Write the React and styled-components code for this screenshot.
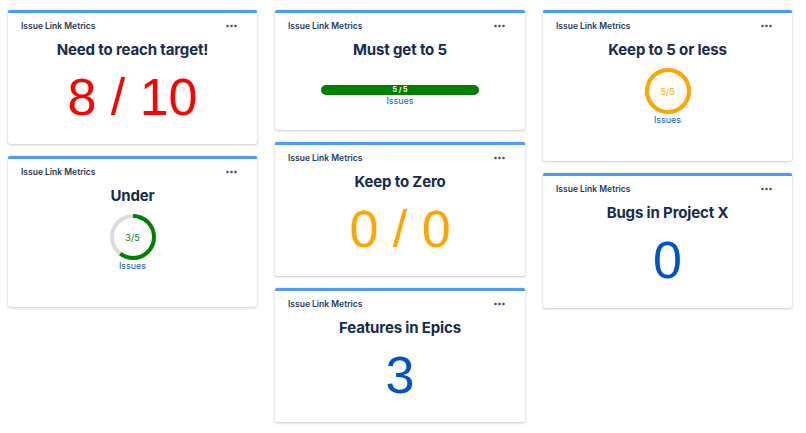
import React from "react";
import styled, { createGlobalStyle } from "styled-components";

const GlobalStyle = createGlobalStyle`
  body {
    margin: 0;
    background: #ffffff;
    font-family: "Inter", "Liberation Sans", Arial, sans-serif;
  }
`;

const Board = styled.div`
  display: grid;
  grid-template-columns: 249px 250px 249px;
  column-gap: 18px;
  align-items: start;
  padding: 10px 8px;
`;

const Column = styled.div`
  display: flex;
  flex-direction: column;
  gap: 12px;
`;

const Card = styled.div`
  box-sizing: border-box;
  height: ${(p) => p.$height}px;
  background: #fff;
  border-top: 3px solid #4c9aff;
  border-radius: 2px;
  box-shadow: 0 1px 3px rgba(9, 30, 66, 0.22), 0 0 1px rgba(9, 30, 66, 0.2);
  display: flex;
  flex-direction: column;
  align-items: center;
`;

const Header = styled.div`
  align-self: stretch;
  display: flex;
  justify-content: space-between;
  align-items: center;
  padding: 8px 20px 0 13px;
  height: 10px;
`;

const Label = styled.span`
  font-size: 8.5px;
  font-weight: 600;
  color: #253858;
  line-height: 10px;
`;

const Dots = styled.svg`
  display: block;
`;

const Title = styled.h2`
  margin: 10px 0 0;
  font-size: 15px;
  line-height: 18px;
  font-weight: 700;
  color: #172b4d;
  letter-spacing: -0.15px;
`;

const BigNumber = styled.div`
  margin-top: 12px;
  font-family: "Liberation Sans", Arial, sans-serif;
  font-size: 52px;
  line-height: 52px;
  color: ${(p) => p.$color};
`;

const BarTrack = styled.div`
  margin-top: 26px;
  width: 158px;
  height: 10px;
  border-radius: 5px;
  background: #008000;
  color: #fff;
  font-size: 7px;
  font-weight: 700;
  line-height: 10px;
  text-align: center;
`;

const IssuesLink = styled.a`
  font-size: 9px;
  line-height: 11px;
  color: #0c5fd8;
  text-decoration: none;
`;

const GaugeWrap = styled.div`
  margin-top: 9px;
  width: 46px;
  height: 46px;
  display: grid;
  place-items: center;
  & > * {
    grid-area: 1 / 1;
  }
`;

const GaugeText = styled.span`
  font-size: 9px;
  color: ${(p) => p.$color};
`;

function MoreIcon() {
  return (
    <Dots width="11" height="4" viewBox="0 0 11 4">
      <circle cx="1.5" cy="2" r="1.3" fill="#42526e" />
      <circle cx="5.5" cy="2" r="1.3" fill="#42526e" />
      <circle cx="9.5" cy="2" r="1.3" fill="#42526e" />
    </Dots>
  );
}

function MetricCard({ title, height, children }) {
  return (
    <Card $height={height}>
      <Header>
        <Label>Issue Link Metrics</Label>
        <MoreIcon />
      </Header>
      <Title>{title}</Title>
      {children}
    </Card>
  );
}

function Gauge({ value, max, color, track }) {
  const r = 21;
  const c = 2 * Math.PI * r;
  return (
    <GaugeWrap>
      <svg width="46" height="46" viewBox="0 0 46 46">
        <circle cx="23" cy="23" r={r} fill="none" stroke={track} strokeWidth="4" />
        <circle
          cx="23"
          cy="23"
          r={r}
          fill="none"
          stroke={color}
          strokeWidth="4"
          strokeDasharray={`${(c * value) / max} ${c}`}
          transform="rotate(-90 23 23)"
        />
      </svg>
      <GaugeText $color={color}>
        {value}/{max}
      </GaugeText>
    </GaugeWrap>
  );
}

export default function App() {
  return (
    <>
      <GlobalStyle />
      <Board>
        <Column>
          <MetricCard title="Need to reach target!" height={134}>
            <BigNumber $color="#ff0000">8 / 10</BigNumber>
          </MetricCard>
          <MetricCard title="Under" height={151}>
            <Gauge value={3} max={5} color="#008000" track="#dcdcdc" />
            <IssuesLink href="#">Issues</IssuesLink>
          </MetricCard>
        </Column>
        <Column>
          <MetricCard title="Must get to 5" height={120}>
            <BarTrack>5 / 5</BarTrack>
            <IssuesLink href="#">Issues</IssuesLink>
          </MetricCard>
          <MetricCard title="Keep to Zero" height={134}>
            <BigNumber $color="#ffa500">0 / 0</BigNumber>
          </MetricCard>
          <MetricCard title="Features in Epics" height={134}>
            <BigNumber $color="#0052cc">3</BigNumber>
          </MetricCard>
        </Column>
        <Column>
          <MetricCard title="Keep to 5 or less" height={151}>
            <Gauge value={5} max={5} color="#ffa500" track="#dcdcdc" />
            <IssuesLink href="#">Issues</IssuesLink>
          </MetricCard>
          <MetricCard title="Bugs in Project X" height={135}>
            <BigNumber $color="#0052cc">0</BigNumber>
          </MetricCard>
        </Column>
      </Board>
    </>
  );
}
